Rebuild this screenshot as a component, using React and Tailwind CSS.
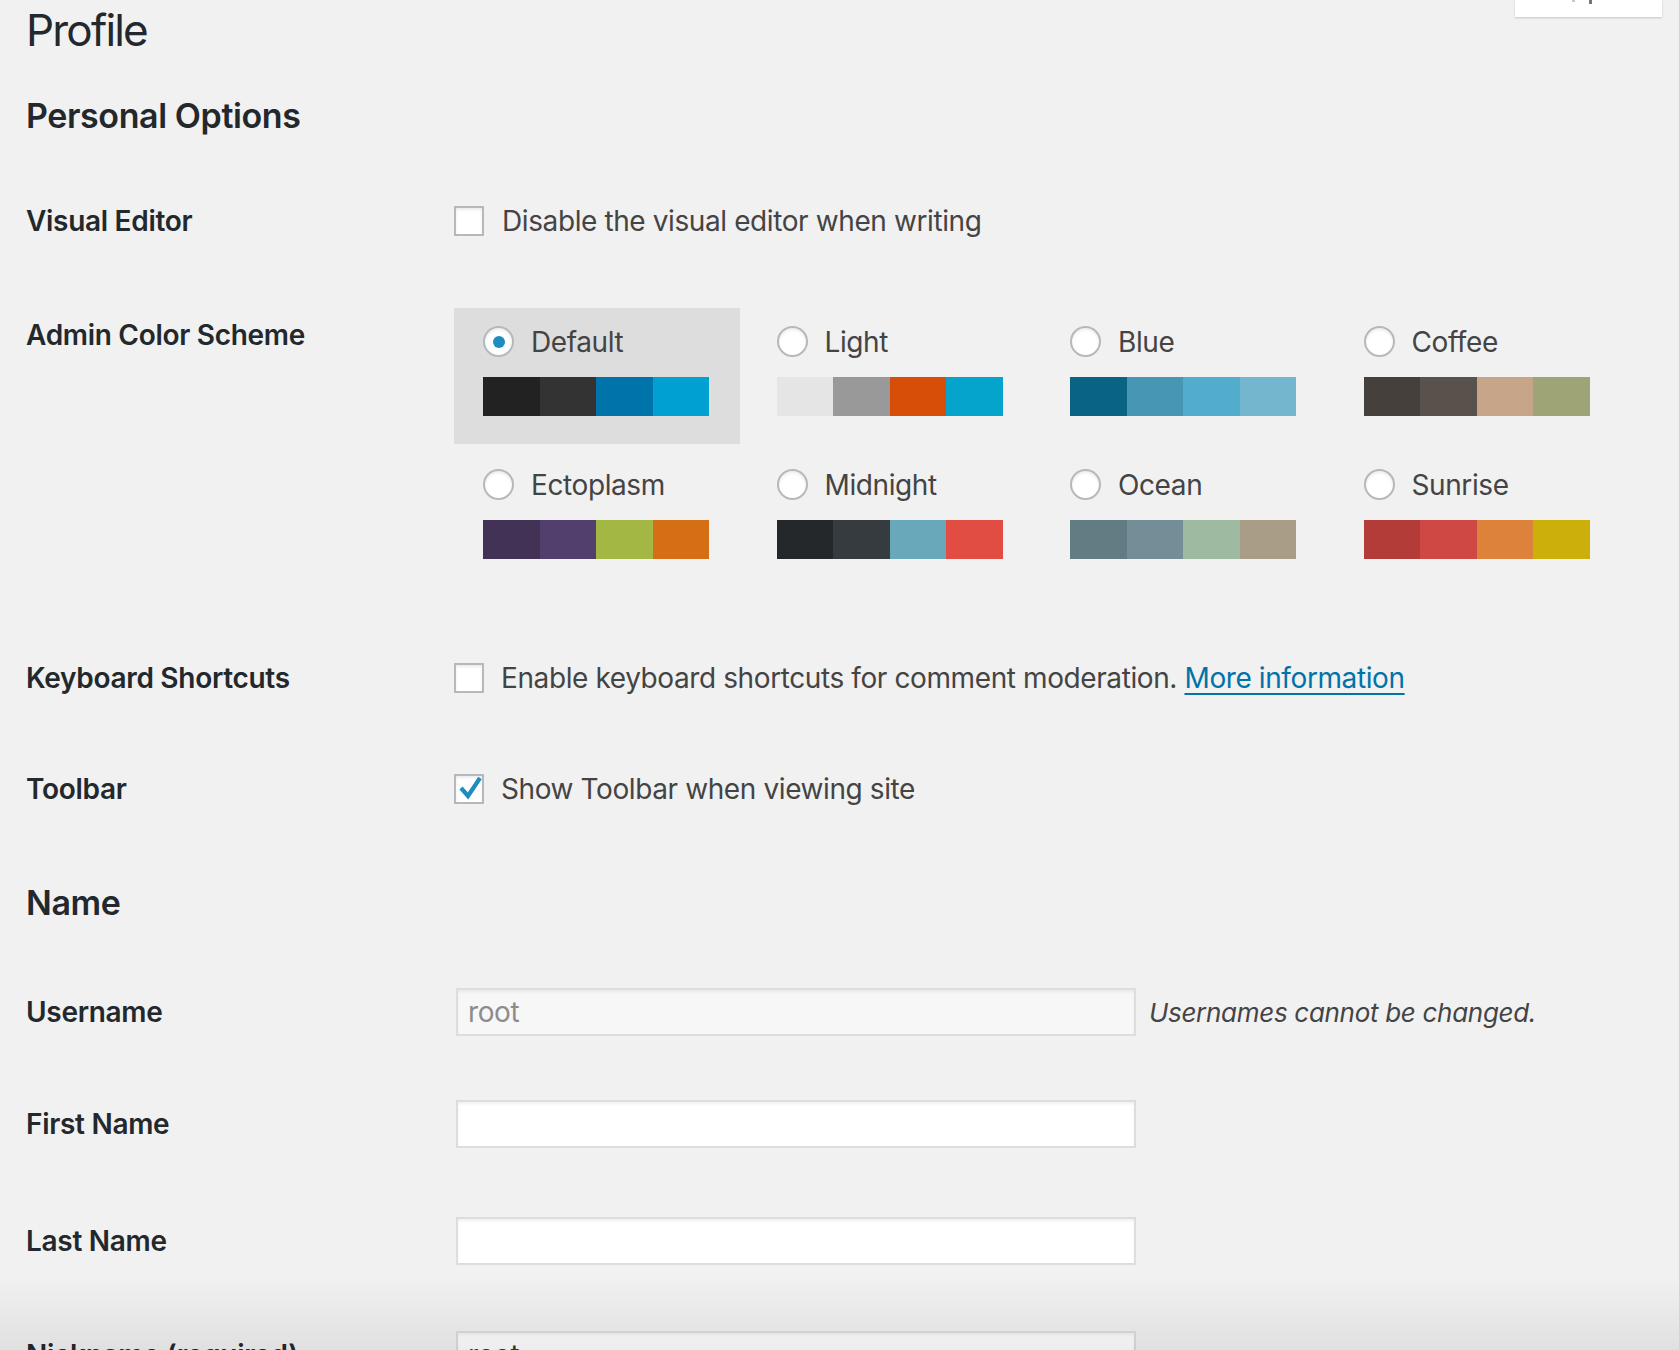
import React from "react";

const schemes = [
  { name: "Default", colors: ["#222222", "#333333", "#0073aa", "#00a0d2"], checked: true },
  { name: "Light", colors: ["#e5e5e5", "#999999", "#d64e07", "#04a4cc"] },
  { name: "Blue", colors: ["#096484", "#4796b3", "#52accc", "#74b6ce"] },
  { name: "Coffee", colors: ["#46403c", "#59524c", "#c7a589", "#9ea476"] },
  { name: "Ectoplasm", colors: ["#413256", "#523f6d", "#a3b745", "#d46f15"] },
  { name: "Midnight", colors: ["#25282b", "#363b3f", "#69a8bb", "#e14d43"] },
  { name: "Ocean", colors: ["#627c83", "#738e96", "#9ebaa0", "#aa9d88"] },
  { name: "Sunrise", colors: ["#b43c38", "#cf4944", "#dd823b", "#ccaf0b"] },
];

function Radio({ checked }) {
  return (
    <span className="w-[31px] h-[31px] rounded-full bg-white border-2 border-[#b4b9be] shadow-[inset_0_2px_3px_rgba(0,0,0,0.08)] flex items-center justify-center shrink-0">
      {checked && <span className="w-[12px] h-[12px] rounded-full bg-[#1e8cbe]" />}
    </span>
  );
}

function Checkbox({ checked }) {
  return (
    <span className="w-[30px] h-[30px] bg-white border-2 border-[#b4b9be] shadow-[inset_0_2px_3px_rgba(0,0,0,0.08)] shrink-0 relative">
      {checked && (
        <svg className="absolute -left-[2px] -top-[2px]" width="30" height="30" viewBox="0 0 30 30">
          <polyline points="7,14 14,22 26,4" fill="none" stroke="#1e8cbe" strokeWidth="4.2" strokeLinejoin="miter" strokeLinecap="butt" />
        </svg>
      )}
    </span>
  );
}

function Row({ label, h, children }) {
  return (
    <div className={`flex items-center ${h}`}>
      <div className="w-[428px] shrink-0 text-[28px] font-semibold tracking-[-0.3px] text-[#23282d]">{label}</div>
      <div className="flex items-center text-[28px] tracking-[-0.4px] text-[#444]">{children}</div>
    </div>
  );
}

function TextInput({ value, readOnly }) {
  return (
    <div
      className={`ml-[2px] w-[680px] h-[48px] border-2 border-[#dddddd] flex items-center pl-[10px] text-[28px] tracking-[-0.4px] shadow-[inset_0_2px_3px_rgba(0,0,0,0.06)] ${
        readOnly ? "bg-[#f7f7f7] text-[#8c8c8c]" : "bg-white text-[#32373c]"
      }`}
    >
      {value}
    </div>
  );
}

export default function App() {
  return (
    <div className="relative h-[1350px] overflow-hidden bg-[#f1f1f1] font-['Inter','Liberation_Sans',sans-serif] text-[#444]">
      {/* Help tab, cut off at the top */}
      <div className="absolute top-0 right-[17px] w-[147px] h-[17px] bg-white shadow-[0_1px_2px_rgba(0,0,0,0.18)]">
        <span className="absolute left-[57px] top-0 w-[3px] h-[2px] bg-[#c8c8c8]" />
        <span className="absolute left-[74px] top-0 w-[3px] h-[4px] bg-[#72777c]" />
      </div>

      <div className="pl-[26px]">
        <h1 className="h-[60px] text-[44px] leading-[60px] font-normal tracking-[-1.8px] text-[#23282d]">Profile</h1>

        <div className="h-[110px] flex items-center">
          <h2 className="text-[34px] font-semibold tracking-[-0.4px] text-[#23282d]">Personal Options</h2>
        </div>

        <Row label="Visual Editor" h="h-[102px]">
          <Checkbox />
          <span className="ml-[18px]">Disable the visual editor when writing</span>
        </Row>

        <div className="flex pt-[36px] pb-[36px]">
          <div className="w-[428px] shrink-0 mt-[7px] text-[28px] leading-[40px] font-semibold tracking-[-0.3px] text-[#23282d]">
            Admin Color Scheme
          </div>
          <div className="grid grid-cols-[repeat(4,286px)] gap-x-[7.5px] gap-y-[7px]">
            {schemes.map((s) => (
              <div
                key={s.name}
                className={`h-[136px] pl-[29px] pr-[31px] pt-[18px] ${s.checked ? "bg-[#dddddd]" : ""}`}
              >
                <div className="flex items-center h-[31px]">
                  <Radio checked={s.checked} />
                  <span className="ml-[17px] text-[28px] tracking-[-0.4px] text-[#444]">{s.name}</span>
                </div>
                <div className="mt-[20px] flex h-[39px]">
                  {s.colors.map((c) => (
                    <div key={c} className="flex-1" style={{ backgroundColor: c }} />
                  ))}
                </div>
              </div>
            ))}
          </div>
        </div>

        <Row label="Keyboard Shortcuts" h="h-[110px]">
          <Checkbox />
          <span className="ml-[17px]">
            Enable keyboard shortcuts for comment moderation.{" "}
            <a href="#" className="text-[#0073aa] underline underline-offset-[5px] decoration-2">
              More information
            </a>
          </span>
        </Row>

        <Row label="Toolbar" h="h-[112px]">
          <Checkbox checked />
          <span className="ml-[17px]">Show Toolbar when viewing site</span>
        </Row>

        <div className="h-[114px] flex items-center">
          <h2 className="text-[34px] font-semibold tracking-[-0.4px] text-[#23282d]">Name</h2>
        </div>

        <Row label="Username" h="h-[106px]">
          <TextInput value="root" readOnly />
          <span className="ml-[13px] italic text-[26px] tracking-[-0.3px] text-[#444]">Usernames cannot be changed.</span>
        </Row>

        <Row label="First Name" h="h-[118px]">
          <TextInput value="" />
        </Row>

        <Row label="Last Name" h="h-[115px]">
          <TextInput value="" />
        </Row>

        <Row label="Nickname (required)" h="h-[114px]">
          <TextInput value="root" />
        </Row>
      </div>

      {/* bottom fade */}
      <div className="pointer-events-none absolute inset-x-0 bottom-0 h-[75px] bg-linear-to-b from-black/0 to-black/[0.07]" />
    </div>
  );
}
